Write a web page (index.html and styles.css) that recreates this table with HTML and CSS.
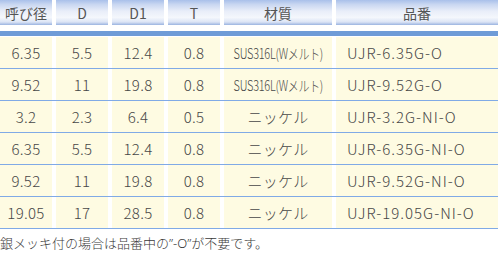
FILE: index.html
```html
<!DOCTYPE html>
<html lang="ja">
<head>
<meta charset="utf-8">
<link rel="stylesheet" href="styles.css">
</head>
<body>
<div class="spec">
  <div class="row head">
    <div class="cell">呼び径</div>
    <div class="cell">D</div>
    <div class="cell">D1</div>
    <div class="cell">T</div>
    <div class="cell">材質</div>
    <div class="cell">品番</div>
  </div>
  <div class="bar"></div>
  <div class="row body">
    <div class="cell">6.35</div><div class="cell">5.5</div><div class="cell">12.4</div><div class="cell">0.8</div>
    <div class="cell mat"><span class="cond">SUS316L(Wメルト)</span></div><div class="cell part">UJR-6.35G-O</div>
  </div>
  <div class="row body">
    <div class="cell">9.52</div><div class="cell">11</div><div class="cell">19.8</div><div class="cell">0.8</div>
    <div class="cell mat"><span class="cond">SUS316L(Wメルト)</span></div><div class="cell part">UJR-9.52G-O</div>
  </div>
  <div class="row body">
    <div class="cell">3.2</div><div class="cell">2.3</div><div class="cell">6.4</div><div class="cell">0.5</div>
    <div class="cell mat">ニッケル</div><div class="cell part">UJR-3.2G-NI-O</div>
  </div>
  <div class="row body">
    <div class="cell">6.35</div><div class="cell">5.5</div><div class="cell">12.4</div><div class="cell">0.8</div>
    <div class="cell mat">ニッケル</div><div class="cell part">UJR-6.35G-NI-O</div>
  </div>
  <div class="row body">
    <div class="cell">9.52</div><div class="cell">11</div><div class="cell">19.8</div><div class="cell">0.8</div>
    <div class="cell mat">ニッケル</div><div class="cell part">UJR-9.52G-NI-O</div>
  </div>
  <div class="row body">
    <div class="cell">19.05</div><div class="cell">17</div><div class="cell">28.5</div><div class="cell">0.8</div>
    <div class="cell mat">ニッケル</div><div class="cell part">UJR-19.05G-NI-O</div>
  </div>
</div>
<p class="note">銀メッキ付の場合は品番中の<span class="q">”-O”</span>が不要です。</p>
</body>
</html>
```
FILE: styles.css
```css
html, body {
  margin: 0;
  padding: 0;
  background: #ffffff;
}
body {
  font-family: "Noto Sans CJK JP", "Noto Sans", sans-serif;
  color: #444444;
}
.spec {
  width: 498px;
}
.row {
  display: grid;
  grid-template-columns: 52px 52px 52px 52px 108px 162px;
  column-gap: 4px;
}
.head {
  height: 25px;
}
.head .cell {
  background: linear-gradient(to bottom, #a9c0ea 0%, #c9d7f1 18%, #e9eef9 45%, #f4f7fc 70%, #dbe4f5 88%, #9ab3e0 100%);
  font-size: 14px;
  color: #555555;
  display: flex;
  align-items: center;
  justify-content: center;
  line-height: 1;
}
.bar {
  margin-top: 6px;
  height: 5px;
  background: #6e9bd7;
  margin-bottom: 1px;
}
.body {
  height: 31px;
  border-bottom: 1px solid #80aae6;
}
.body .cell {
  background: #fefbe2;
  font-size: 15px;
  font-weight: 300;
  color: #474747;
  display: flex;
  align-items: center;
  justify-content: center;
  line-height: 1;
  letter-spacing: 0.3px;
}
.body .part {
  justify-content: flex-start;
  padding-left: 11px;
  letter-spacing: 1px;
}
.cond {
  display: inline-block;
  font-size: 14px;
  transform: scaleX(0.78);
  letter-spacing: -0.3px;
  white-space: nowrap;
}
.note {
  margin: 6px 0 0 0;
  font-size: 13px;
  font-weight: 300;
  color: #3a3a3a;
  line-height: 16px;
}
.q {
  font-family: "Noto Sans", sans-serif;
}
```
